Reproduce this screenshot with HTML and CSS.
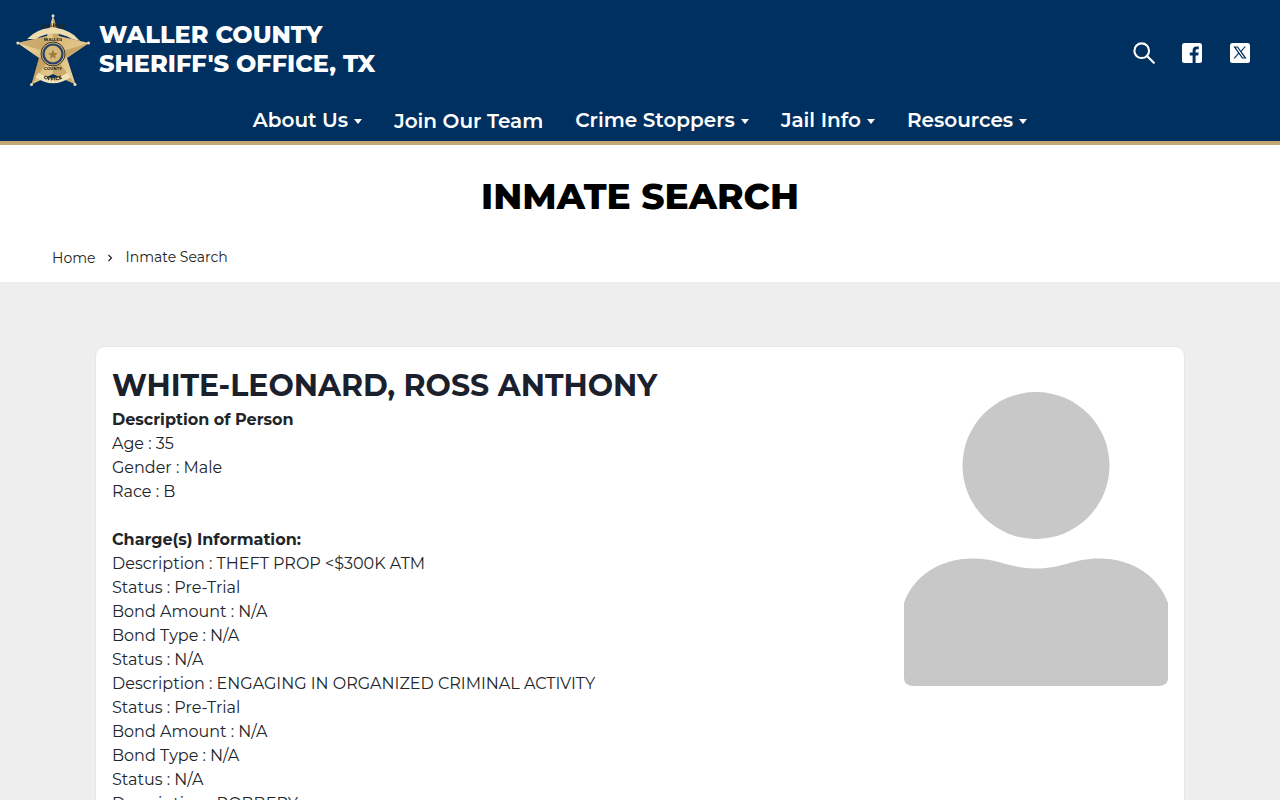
FILE: index.html
```html
<!DOCTYPE html>
<html lang="en">
<head>
<meta charset="utf-8">
<title>Inmate Search | Waller County Sheriff's Office, TX</title>
<link rel="stylesheet" href="styles.css">
</head>
<body>
<header class="site-header">
  <div class="top-row">
    <a class="brand" href="#">
      <svg class="badge" viewBox="0 0 74 74" aria-hidden="true">
        <defs>
          <linearGradient id="gold" x1="0" y1="0" x2="1" y2="1">
            <stop offset="0" stop-color="#f6e8c2"/>
            <stop offset=".5" stop-color="#dcbc7c"/>
            <stop offset="1" stop-color="#eedba8"/>
          </linearGradient>
          <path id="arc-top" d="M19 18 Q37 8 55 18"/>
          <path id="arc-bottom" d="M23 62 Q37 71 51 62"/>
        </defs>
        <path d="M37 1.500 L43 22 L73 29 L51 44 L59.500 70.500 L37 60 L15.500 70.500 L23 44 L1.500 29 L31 22 Z" fill="url(#gold)"/>
        <path d="M37 1.500 L43 22 L37 40 Z M73 29 L51 44 L37 40 Z M59.500 70.500 L37 60 L37 40 Z M15.500 70.500 L23 44 L37 40 Z M1.500 29 L31 22 L37 40 Z" fill="#b08a45" opacity=".5"/>
        <circle cx="37" cy="1.800" r="1.500" fill="#e9dfc6"/>
        <circle cx="1.800" cy="29" r="1.500" fill="#e9dfc6"/>
        <circle cx="72.500" cy="29" r="1.500" fill="#e9dfc6"/>
        <circle cx="15.500" cy="70.500" r="1.500" fill="#e9dfc6"/>
        <circle cx="59" cy="70.500" r="1.500" fill="#e9dfc6"/>
        <path d="M17 20 Q37 7 58 21 L64 27 L56 25 Q37 14 20 25 L11 25 Z" fill="#efdcae"/>
        <text class="badge-text"><textPath href="#arc-top" startOffset="50%">SHERIFF</textPath></text>
        <text class="badge-small" x="37" y="26.500">WALLER</text>
        <circle cx="37" cy="40" r="12" fill="#cfb272" stroke="#3b3a2f" stroke-width="1"/>
        <circle cx="37" cy="40" r="9.500" fill="none" stroke="#24426a" stroke-width="2.200"/>
        <circle cx="37" cy="40" r="7.300" fill="#d6b97c"/>
        <path d="M37 35.500 L38.300 39 L41.800 39.200 L39.100 41.400 L40 44.800 L37 42.900 L34 44.800 L34.900 41.400 L32.200 39.200 L35.700 39 Z" fill="#a07c38"/>
        <text class="badge-small" x="37" y="56">COUNTY</text>
        <path d="M21 61 Q37 72 53 61" fill="none" stroke="#f0e2b8" stroke-width="5.500"/>
        <text class="badge-text"><textPath href="#arc-bottom" startOffset="50%">OFFICE</textPath></text>
      </svg>
      <span class="brand-name">WALLER COUNTY<br>SHERIFF'S OFFICE, TX</span>
    </a>
    <div class="tools">
      <a href="#" class="tool-search" aria-label="Search">
        <svg class="tool" viewBox="0 0 24 24" fill="none" stroke="#fff" stroke-width="2.300" stroke-linecap="round"><circle cx="9.500" cy="9.500" r="8"/><path d="M15.300 15.300 L22.700 22.700"/></svg>
      </a>
      <a href="#" aria-label="Facebook">
        <svg class="tool-brand" viewBox="0 0 20 20"><path fill="#fff" fill-rule="evenodd" d="M2.500 0h15A2.500 2.500 0 0 1 20 2.500v15a2.500 2.500 0 0 1-2.500 2.500h-3.900v-7.400h2.600l.5-3h-3.100V7.700c0-.9.400-1.500 1.600-1.500h1.600V3.600c-.6-.1-1.400-.2-2.300-.2-2.400 0-3.900 1.400-3.900 4v2.200H7.800v3h2.800V20H2.500A2.500 2.500 0 0 1 0 17.500v-15A2.500 2.500 0 0 1 2.500 0z"/></svg>
      </a>
      <a href="#" aria-label="X">
        <svg class="tool-brand" viewBox="0 0 20 20"><rect width="20" height="20" rx="2.500" fill="#fff"/><path fill="#00305f" fill-rule="evenodd" d="M3.400 3.500h4.500l3 4.200 3.600-4.200h1.400l-4.300 5 5 7h-4.500l-3.300-4.600-4 4.600H3.400l4.700-5.500zM5.700 4.600l7.100 9.800h1.500L7.200 4.600z"/></svg>
      </a>
    </div>
  </div>
  <nav class="main-nav">
    <a href="#">About Us<i class="caret"></i></a>
    <a href="#" class="plain">Join Our Team</a>
    <a href="#">Crime Stoppers<i class="caret"></i></a>
    <a href="#">Jail Info<i class="caret"></i></a>
    <a href="#">Resources<i class="caret"></i></a>
  </nav>
</header>

<section class="title-band">
  <h1>INMATE SEARCH</h1>
  <div class="crumbs">
    <a href="#">Home</a>
    <svg class="sep" viewBox="0 0 6 8" fill="none" stroke="#222" stroke-width="1.200"><path d="M1.500 1 L4.500 4 L1.500 7"/></svg>
    <span>Inmate Search</span>
  </div>
</section>

<main class="content">
  <article class="card">
    <div class="details">
      <h2>WHITE-LEONARD, ROSS ANTHONY</h2>
      <p><b>Description of Person</b><br>
      Age : 35<br>
      Gender : Male<br>
      Race : B<br>
      <br>
      <b>Charge(s) Information:</b><br>
      Description : THEFT PROP &lt;$300K ATM<br>
      Status : Pre-Trial<br>
      Bond Amount : N/A<br>
      Bond Type : N/A<br>
      Status : N/A<br>
      Description : ENGAGING IN ORGANIZED CRIMINAL ACTIVITY<br>
      Status : Pre-Trial<br>
      Bond Amount : N/A<br>
      Bond Type : N/A<br>
      Status : N/A<br>
      Description : ROBBERY</p>
    </div>
    <svg class="avatar" viewBox="0 0 264 300" aria-hidden="true">
      <circle cx="132" cy="79.500" r="73.500" fill="#c8c8c8"/>
      <path d="M0 217 C10 190 35 172.500 69 172.500 C95 172.500 105 182.500 132 182.500 C159 182.500 169 172.500 195 172.500 C229 172.500 254 190 264 217 V292 Q264 300 254 300 H10 Q0 300 0 292 Z" fill="#c8c8c8"/>
    </svg>
  </article>
</main>
</body>
</html>
```

FILE: styles.css
```css
* { box-sizing: border-box; }
html, body { margin: 0; height: 800px; overflow: hidden; }
body {
  font-family: "Montserrat", "Inter", "Liberation Sans", sans-serif;
  font-size: 16px;
  line-height: 24px;
  color: #212529;
  background: #eeeeee;
}
a { color: inherit; text-decoration: none; }

.site-header {
  height: 145px;
  background: #00305f;
  border-bottom: 4px solid #c4a872;
  color: #fff;
}
.top-row {
  height: 106px;
  padding: 8px 30px 0 16px;
  display: flex;
  justify-content: space-between;
  align-items: flex-start;
}
.brand { display: flex; align-items: center; gap: 9px; }
.badge { width: 74px; height: 74px; flex: none; margin-top: 6px; filter: blur(.3px); }
.badge-text {
  font-size: 5px;
  font-weight: 800;
  fill: #2b2616;
  text-anchor: middle;
}
.badge-small {
  font-size: 4px;
  font-weight: 800;
  fill: #3a3320;
  text-anchor: middle;
}
.brand-name {
  font-size: 24px;
  line-height: 29px;
  font-weight: 800;
  margin-top: 2px;
}
.tools { display: flex; gap: 28px; margin: 34px 0 0; }
.tools a { display: block; height: 22px; }
.tools .tool-search { margin-right: -1px; }
.tool { display: block; width: 22px; height: 22px; }
.tool-brand { display: block; width: 20px; height: 20px; margin-top: 1px; }

.main-nav {
  display: flex;
  justify-content: center;
  gap: 32px;
  font-size: 20px;
  line-height: 28px;
  font-weight: 600;
}
.main-nav a { display: flex; align-items: center; }
.main-nav .plain { position: relative; top: 1px; }
.caret {
  width: 0; height: 0;
  margin: 2px 0 0 6px;
  border-left: 4px solid transparent;
  border-right: 4px solid transparent;
  border-top: 5px solid #fff;
}

.title-band { background: #fff; height: 137px; padding-top: 29px; }
h1 {
  margin: 0;
  text-align: center;
  font-size: 36px;
  line-height: 44px;
  font-weight: 800;
  color: #000;
}
.crumbs {
  display: flex;
  align-items: center;
  margin: 27px 0 0 52px;
  font-size: 14px;
  line-height: 24px;
  color: #222;
}
.crumbs a { position: relative; top: 1px; }
.sep { width: 6px; height: 8px; margin: 2px 12px 0 12px; }

.content { padding: 64px 95px 0; }
.card {
  display: flex;
  justify-content: space-between;
  align-items: flex-start;
  height: 800px;
  padding: 16px;
  background: #fff;
  border: 1px solid #e6e6e6;
  border-radius: 10px;
}
h2 {
  margin: 5px 0 4px;
  font-size: 30px;
  line-height: 36px;
  font-weight: 700;
  color: #1a202c;
}
.details p { margin: 0; }
.details b { font-weight: 700; }
.avatar { width: 264px; height: 300px; margin-top: 23px; flex: none; filter: blur(.4px); }
```
